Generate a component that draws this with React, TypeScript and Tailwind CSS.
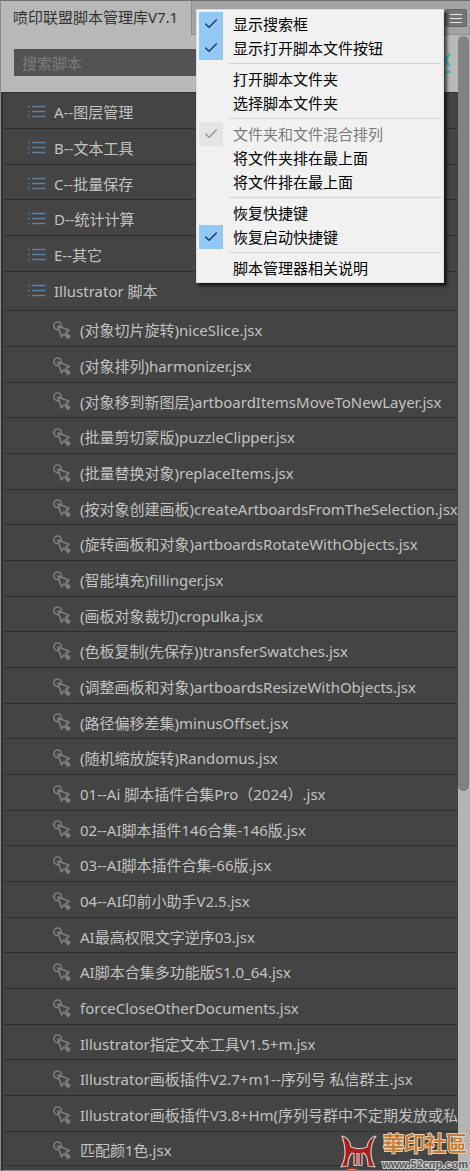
import React from "react";
import { Check } from "lucide-react";

type MenuEntry = { label: string; checked?: boolean; disabled?: boolean };

const menuSections: MenuEntry[][] = [
  [
    { label: "显示搜索框", checked: true },
    { label: "显示打开脚本文件按钮", checked: true },
  ],
  [{ label: "打开脚本文件夹" }, { label: "选择脚本文件夹" }],
  [
    { label: "文件夹和文件混合排列", checked: true, disabled: true },
    { label: "将文件夹排在最上面" },
    { label: "将文件排在最上面" },
  ],
  [{ label: "恢复快捷键" }, { label: "恢复启动快捷键", checked: true }],
  [{ label: "脚本管理器相关说明" }],
];

const folders = ["A--图层管理", "B--文本工具", "C--批量保存", "D--统计计算", "E--其它"];

const scripts = [
  "(对象切片旋转)niceSlice.jsx",
  "(对象排列)harmonizer.jsx",
  "(对象移到新图层)artboardItemsMoveToNewLayer.jsx",
  "(批量剪切蒙版)puzzleClipper.jsx",
  "(批量替换对象)replaceItems.jsx",
  "(按对象创建画板)createArtboardsFromTheSelection.jsx",
  "(旋转画板和对象)artboardsRotateWithObjects.jsx",
  "(智能填充)fillinger.jsx",
  "(画板对象裁切)cropulka.jsx",
  "(色板复制(先保存))transferSwatches.jsx",
  "(调整画板和对象)artboardsResizeWithObjects.jsx",
  "(路径偏移差集)minusOffset.jsx",
  "(随机缩放旋转)Randomus.jsx",
  "01--Ai 脚本插件合集Pro（2024）.jsx",
  "02--AI脚本插件146合集-146版.jsx",
  "03--AI脚本插件合集-66版.jsx",
  "04--AI印前小助手V2.5.jsx",
  "AI最高权限文字逆序03.jsx",
  "AI脚本合集多功能版S1.0_64.jsx",
  "forceCloseOtherDocuments.jsx",
  "Illustrator指定文本工具V1.5+m.jsx",
  "Illustrator画板插件V2.7+m1--序列号 私信群主.jsx",
  "Illustrator画板插件V3.8+Hm(序列号群中不定期发放或私信群主).jsx",
  "匹配颜1色.jsx",
];

function ListIcon() {
  return (
    <svg viewBox="0 0 18 14" className="h-[14px] w-[18px] shrink-0" stroke="#5b7f9f" strokeWidth="1.5">
      <path d="M0 1.5h1.5M0 6.5h1.5M0 11.5h1.5M4 1.5h13.5M4 6.5h13.5M4 11.5h13.5" />
    </svg>
  );
}

function ScriptIcon() {
  return (
    <svg viewBox="0 0 18 19" className="h-[19px] w-[18px] shrink-0" fill="none" stroke="#7e7e7e" strokeWidth="1.6">
      <circle cx="4.6" cy="4.8" r="3.8" />
      <path
        d="M5 5l3.4 11 2.6-3.2 4 4.6 2-1.9-4.2-4 3.4-2.2z"
        fill="#444444"
        strokeLinejoin="round"
      />
      <path d="M13 13.5l3 3" strokeWidth="2.4" />
    </svg>
  );
}

function FolderRow({ label }: { label: string }) {
  return (
    <button type="button" className="flex h-[35px] w-full items-center gap-2 pl-[25px] pt-[3px] text-left">
      <ListIcon />
      <span className="truncate">{label}</span>
    </button>
  );
}

function OptionsMenu() {
  return (
    <div
      role="menu"
      className="absolute left-[195px] top-[9px] z-20 w-[248px] border border-[#dcdcdc] bg-[#f1f1f1] p-[2px] text-black shadow-[3px_3px_3px_rgba(0,0,0,0.65)]"
    >
      {menuSections.map((section, i) => (
        <React.Fragment key={i}>
          {i > 0 && <hr className="my-[3px] ml-[30px] border-[#d2d2d2]" />}
          {section.map((item) => (
            <button
              key={item.label}
              type="button"
              role={item.checked ? "menuitemcheckbox" : "menuitem"}
              aria-checked={item.checked}
              disabled={item.disabled}
              className="flex h-6 w-full items-center gap-[10px] text-left disabled:text-[#7b7b7b]"
            >
              <span
                className={`flex h-6 w-6 shrink-0 items-center justify-center ${
                  item.checked ? (item.disabled ? "bg-[#e4e4e4] text-[#9a9a9a]" : "bg-[#91c8f6] text-[#1c3a55]") : ""
                }`}
              >
                {item.checked && <Check size={16} strokeWidth={2.2} />}
              </span>
              {item.label}
            </button>
          ))}
        </React.Fragment>
      ))}
    </div>
  );
}

function Watermark() {
  return (
    <div className="absolute bottom-0 right-[2px] z-10 flex items-end gap-1">
      <svg viewBox="0 0 38 38" className="h-[38px] w-[38px]">
        <path
          d="M2 3c5 1 8 5 9 11 5 2 11 2 16 0 1-6 4-10 9-11-4 6-5 11-5 16 0 5 1 10 4 15l-7-1c0-6-1-10-4-13-1 0-1.500 0-2 .5v12h-3v-12h-2v12h-3v-12c-.5-.5-1-.5-2-.5-3 3-4 7-4 13l-7 1c3-5 4-10 4-15 0-5-1-10-3-16z"
          fill="#a8201e"
          stroke="#cfcac4"
          strokeWidth="1.2"
          strokeLinejoin="round"
        />
        <ellipse cx="12" cy="38" rx="6" ry="2.5" fill="#e8734a" />
      </svg>
      <div className="flex flex-col items-center pb-px">
        <span className="font-['Noto_Sans_CJK_TC',sans-serif] text-[21px] font-medium leading-8 text-[#c8742a] [paint-order:stroke] [-webkit-text-stroke:2px_#e0d2bd]">
          華印社區
        </span>
        <span className="font-['Liberation_Sans',sans-serif] text-[11px] font-bold leading-3 text-[#5a5a5a] [paint-order:stroke] [-webkit-text-stroke:2px_#cacaca]">
          www.52cnp.com
        </span>
      </div>
    </div>
  );
}

export default function App() {
  return (
    <div className="relative flex min-h-screen flex-col overflow-hidden border-l border-[#8a8a8a] bg-[#b8b8b8] font-['Noto_Sans','Noto_Sans_CJK_SC',sans-serif] text-[15px] leading-6 text-[#c2c2c2]">
      <header className="flex h-[35px] border-t border-[#707070] bg-[#a3a3a3]">
        <h1 className="w-[190px] whitespace-nowrap bg-[#b8b8b8] pl-3 pt-1 text-[#333333]">喷印联盟脚本管理库V7.1</h1>
        <div className="flex flex-1 items-start justify-end border-b border-l border-[#8e8e8e] pr-[3px] pt-2">
          <button
            type="button"
            aria-label="菜单"
            className="flex h-[18px] w-[22px] flex-col items-center justify-center gap-[3px] rounded-xs border border-[#666666] bg-[#757575]"
          >
            <span className="h-px w-3 bg-[#e6e6e6]" />
            <span className="h-px w-3 bg-[#e6e6e6]" />
            <span className="h-px w-3 bg-[#e6e6e6]" />
          </button>
        </div>
      </header>

      <div className="flex flex-1">
        <main className="flex min-w-0 flex-1 flex-col">
          <div className="flex h-[57px] items-center gap-3 pl-[13px] pr-[6px] pb-[2px]">
            <input
              type="text"
              aria-label="搜索脚本"
              placeholder="搜索脚本"
              className="h-[27px] min-w-0 flex-1 bg-[#535353] px-2 placeholder:text-[#7c7c7c]"
            />
            <button type="button" aria-label="打开脚本文件">
              <svg viewBox="0 0 22 22" className="h-[22px] w-[22px]" fill="none" stroke="#2cc4cc" strokeWidth="2">
                <path d="M1 20h20M20 2l-5 6 5 6M3 2v12h8" />
              </svg>
            </button>
          </div>

          <ul className="flex-1 border-b border-l-2 border-b-[#8a8a8a] border-l-[#333333] bg-[#444444]">
            {folders.map((name) => (
              <li key={name} className="h-9 border-t border-[#303030] nth-[3n]:h-[35px]">
                <FolderRow label={name} />
              </li>
            ))}
            <li className="border-t border-[#303030]">
              <div className="pb-[3px]">
                <FolderRow label="Illustrator 脚本" />
              </div>
              <ul>
                {scripts.map((name) => (
                  <li key={name} className="h-9 border-t border-[#303030] nth-[3n]:h-[35px] last:border-b">
                    <button
                      type="button"
                      className="flex h-full w-full items-center gap-[9px] overflow-hidden whitespace-nowrap pl-[50px] pt-[3px] text-left"
                    >
                      <ScriptIcon />
                      {name}
                    </button>
                  </li>
                ))}
              </ul>
            </li>
          </ul>
        </main>

        <div className="w-3 shrink-0 bg-[#b4b4b4] pt-px">
          <div className="h-[755px] w-[11px] rounded-full bg-[#828282]" />
        </div>
      </div>

      <OptionsMenu />
      <Watermark />
    </div>
  );
}
